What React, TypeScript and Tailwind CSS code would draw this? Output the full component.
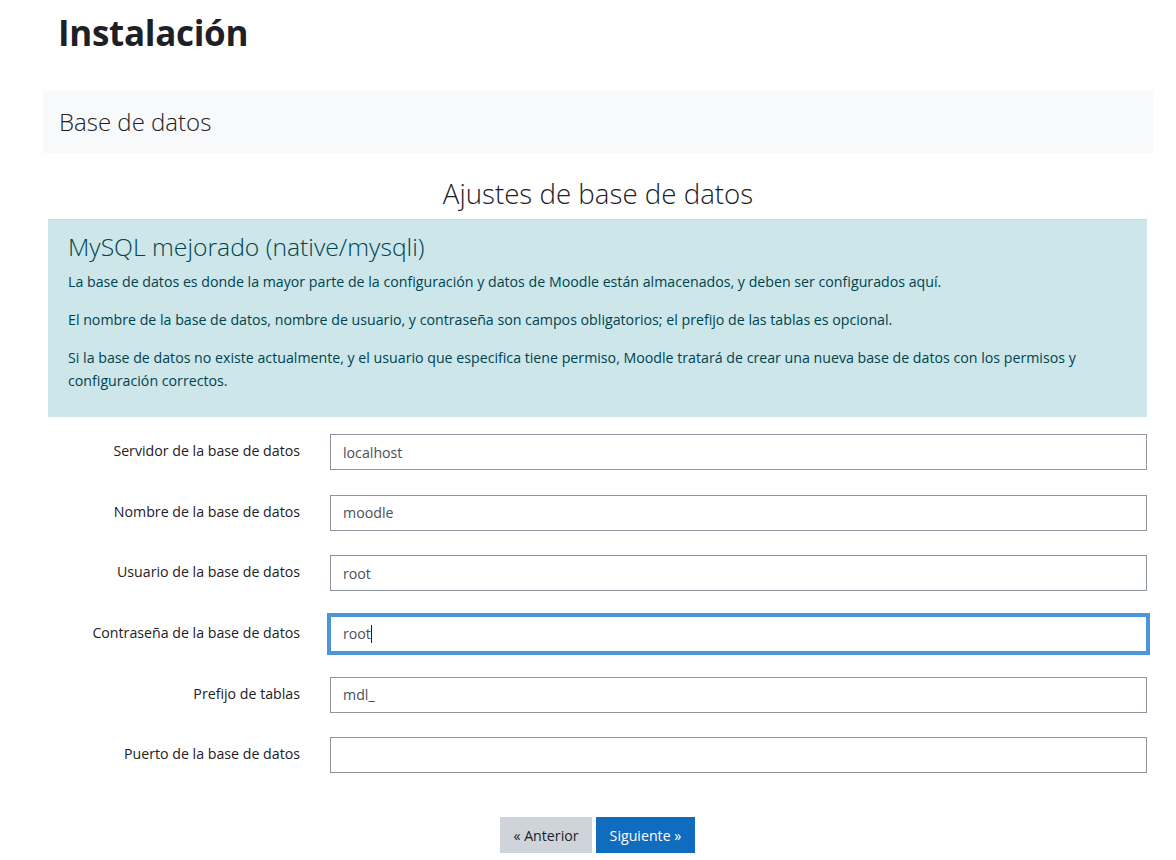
import { ReactNode } from "react";

const fields = [
  { label: "Servidor de la base de datos", value: "localhost" },
  { label: "Nombre de la base de datos", value: "moodle" },
  { label: "Usuario de la base de datos", value: "root" },
  { label: "Contraseña de la base de datos", value: "root", focused: true },
  { label: "Prefijo de tablas", value: "mdl_" },
  { label: "Puerto de la base de datos", value: "" },
];

function Row({ label, children }: { label: string; children: ReactNode }) {
  return (
    <div className="flex items-start">
      <label className="w-[252px] shrink-0 text-right pt-[6px] text-[14.2px] text-[#1d2125]">{label}</label>
      <div className="ml-[30px] flex-1">{children}</div>
    </div>
  );
}

export default function App() {
  return (
    <div className="bg-white min-h-[860px] text-[#1d2125]" style={{ fontFamily: '"Open Sans", "Noto Sans", sans-serif' }}>
      <div className="ml-[43px] w-[1110px]">
        <h2 className="px-[15px] pt-[12px] text-[35px] font-bold leading-[1.2] tracking-[-0.3px]">Instalación</h2>
        <div className="mt-[37px] h-[62px] bg-[#f8f9fa] pl-[16px] flex items-center">
          <h3 className="text-[24px] font-light">Base de datos</h3>
        </div>
        <h2 className="mt-[24px] text-center text-[27.7px] font-light leading-[1.2]">Ajustes de base de datos</h2>
        <div className="ml-[5px] mr-[6px]">
          <div className="mt-[9px] h-[198px] bg-[#cce6ea] border-t border-[#c2e1e6] px-[20px] pt-[12px] text-[#00434e]">
            <h3 className="text-[24.7px] font-light leading-[1.2] mb-[8px]">MySQL mejorado (native/mysqli)</h3>
            <p className="text-[14.2px] leading-[23px] mb-[15px]">
              La base de datos es donde la mayor parte de la configuración y datos de Moodle están almacenados, y deben ser configurados aquí.
            </p>
            <p className="text-[14.2px] leading-[23px] mb-[15px]">
              El nombre de la base de datos, nombre de usuario, y contraseña son campos obligatorios; el prefijo de las tablas es opcional.
            </p>
            <p className="text-[14.2px] leading-[23px]">
              Si la base de datos no existe actualmente, y el usuario que especifica tiene permiso, Moodle tratará de crear una nueva base de datos con los permisos y configuración correctos.
            </p>
          </div>
          <div className="mt-[17px] flex flex-col gap-[24.6px]">
            {fields.map((f) => (
              <Row key={f.label} label={f.label}>
                {f.focused ? (
                  <div className="h-[36px] border border-[#4b95d9] shadow-[0_0_0_3px_#4b95d9] bg-white px-[12px] flex items-center text-[14.2px] text-[#495057]">
                    <span>{f.value}</span>
                    <span className="inline-block w-px h-[18px] bg-[#1d2125]" />
                  </div>
                ) : (
                  <div className="h-[36px] border border-[#8f959e] bg-white px-[12px] flex items-center text-[14.2px] text-[#495057]">
                    {f.value}
                  </div>
                )}
              </Row>
            ))}
          </div>
          <div className="mt-[44px] flex justify-center gap-[4px]">
            <button className="h-[36px] w-[92px] bg-[#ced4da] text-[14.2px] text-[#1d2125]">« Anterior</button>
            <button className="h-[36px] w-[99px] bg-[#0f6cbf] text-[14.2px] text-white">Siguiente »</button>
          </div>
        </div>
      </div>
    </div>
  );
}
